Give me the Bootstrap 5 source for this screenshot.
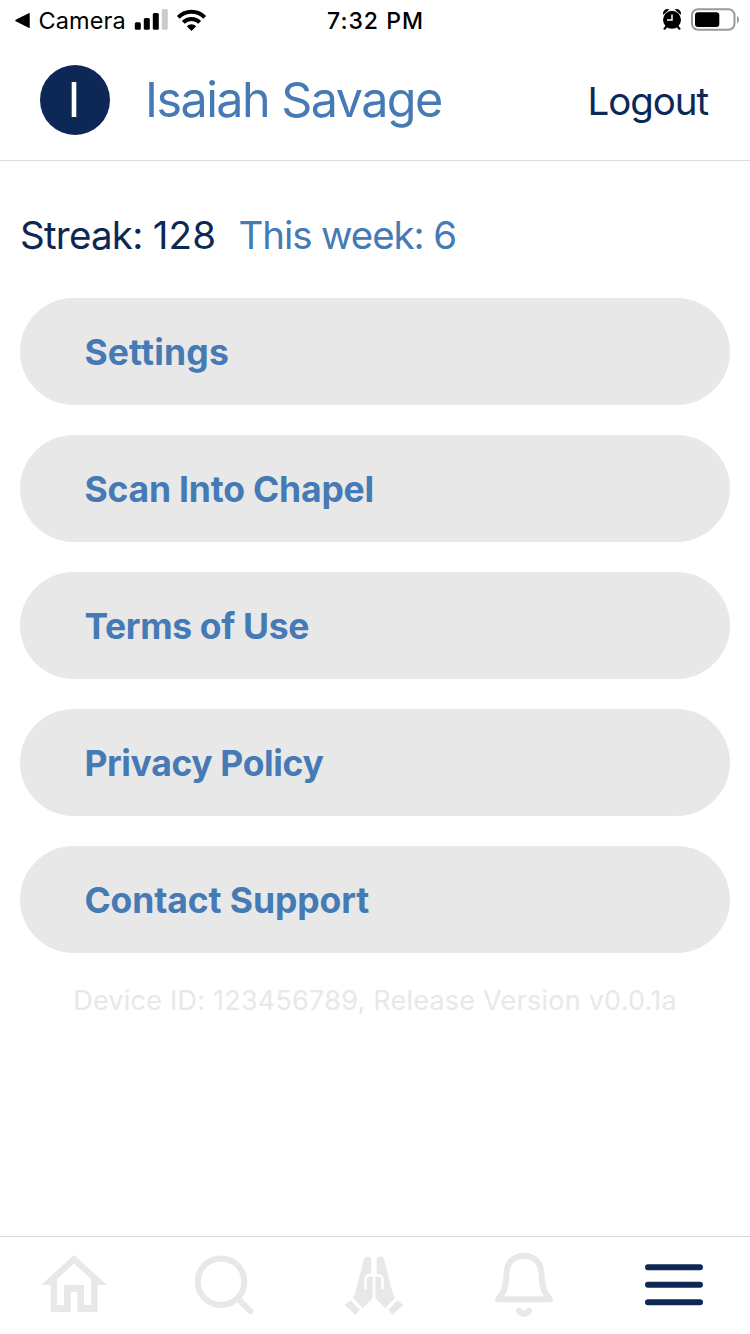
<!DOCTYPE html>
<html lang="en">
<head>
<meta charset="utf-8">
<meta name="viewport" content="width=device-width, initial-scale=1">
<title>Profile menu</title>
<link rel="stylesheet" href="https://cdn.jsdelivr.net/npm/bootstrap@5.3.0/dist/css/bootstrap.min.css">
<style>
:root{--navy:#0d2855;--blue:#467ab5;--mist:#e8e8e8}
body{font-family:Inter,"Liberation Sans",sans-serif;height:1334px;overflow:hidden;line-height:1.2}
svg{display:block;flex:none}
.status-bar{height:40px;color:#000}
.back-app{font-size:23.5px;letter-spacing:.1px;margin-left:8.5px;width:88px;padding-top:2px}
.clock{font-size:23px;font-weight:500;letter-spacing:1.03px;padding:3px 0 0 1px}
.profile-bar{height:121px;border-bottom:1px solid #dcdcdc;padding:0 42px 0 40px}
.avatar{width:70px;height:70px;background:var(--navy);font-size:48.5px;line-height:69px;margin-right:35px;padding-right:2px}
.user-name{font-size:48.5px;letter-spacing:-1.566px;color:var(--blue);line-height:58px}
.logout{font-size:38.5px;letter-spacing:-1.06px;color:var(--navy);padding-top:2px}
.stats{font-size:38.5px;line-height:46px;padding-top:51px;margin-bottom:40px}
.streak{color:var(--navy);letter-spacing:-.75px;width:218.5px}
.streak .count{letter-spacing:.2px}
.week{color:var(--blue);letter-spacing:-1.1px}
.content-area{padding:0 20px}
.menu-list{gap:30px}
.menu-pill{height:107px;background:var(--mist);color:var(--blue);font-size:35.5px;font-weight:700;text-align:left;padding:1px 64.4px 0;border:0;line-height:43px}
.device{font-size:27px;line-height:32px;letter-spacing:.23px;color:var(--mist);margin-top:32px}
.tab-bar{height:98px;border-top:1px solid #d6d6d6;color:var(--mist)}
.tab-bar a{color:inherit;width:150px}
.tab-bar a.current{color:var(--navy)}
</style>
</head>
<body class="d-flex flex-column bg-white">
<header>
  <div class="status-bar row g-0 align-items-center">
    <div class="col-4 d-flex align-items-center">
      <svg width="30" height="40" viewBox="0 0 30 40"><path d="M16 20.500 29 13.800v13.400z" fill="#000" stroke="#000" stroke-width="1.500" stroke-linejoin="round"/></svg>
      <span class="back-app">Camera</span>
      <svg width="86" height="40" viewBox="127.200 0 86 40">
        <rect x="135" y="22.300" width="6" height="7.400" rx="1.500"/><rect x="144" y="18" width="6" height="11.700" rx="1.500"/><rect x="153" y="13" width="6" height="16.700" rx="1.500"/><rect x="162" y="9" width="6" height="20.700" rx="1.500" fill="#ccc"/>
        <path d="M178.500 17.300a18.500 18.500 0 0 1 26.400 0M183.500 22.400a11.600 11.600 0 0 1 16.400 0" fill="none" stroke="#000" stroke-width="4"/>
        <path d="M187 26.300a6.600 6.600 0 0 1 9.400 0l-4.700 4.600z"/>
      </svg>
    </div>
    <div class="col-4 text-center clock">7:32 PM</div>
    <div class="col-4 d-flex justify-content-end">
      <svg width="100" height="40" viewBox="650 0 100 40">
        <circle cx="672" cy="19.800" r="9"/>
        <path d="M663 15a4.600 4.600 0 0 1 6.300-5.500zM681 15a4.600 4.600 0 0 0-6.300-5.500z"/>
        <path d="M666.500 26.500l-2 2.200M677.500 26.500l2 2.200" stroke="#000" stroke-width="2.200" stroke-linecap="round"/>
        <path d="M672 14.500V20h-5" fill="none" stroke="#fff" stroke-width="1.500"/>
        <rect x="692" y="9.200" width="42.500" height="20.600" rx="6" fill="none" stroke="#999" stroke-width="2"/>
        <rect x="695" y="12.200" width="24.300" height="14.800" rx="3"/>
        <path d="M737 15.700c2.700 1.300 2.700 6.300 0 7.600z" fill="#999"/>
      </svg>
    </div>
  </div>
  <div class="profile-bar d-flex align-items-center">
    <div class="avatar rounded-circle text-white text-center">I</div>
    <div class="user-name">Isaiah Savage</div>
    <a href="#" class="logout ms-auto text-decoration-none">Logout</a>
  </div>
</header>
<main class="content-area flex-grow-1">
  <div class="stats d-flex"><span class="streak">Streak: <span class="count">128</span></span><span class="week">This week: 6</span></div>
  <div class="menu-list d-grid">
    <button class="menu-pill rounded-pill"><span style="letter-spacing:.17px">Settings</span></button>
    <button class="menu-pill rounded-pill"><span style="letter-spacing:-.19px">Scan Into Chapel</span></button>
    <button class="menu-pill rounded-pill"><span style="letter-spacing:-.35px">Terms of Use</span></button>
    <button class="menu-pill rounded-pill"><span style="letter-spacing:-.375px">Privacy Policy</span></button>
    <button class="menu-pill rounded-pill"><span style="letter-spacing:-.1px">Contact Support</span></button>
  </div>
  <div class="device text-center text-nowrap">Device ID: 123456789, Release Version v0.0.1a</div>
</main>
<nav class="tab-bar d-flex">
  <a href="#" aria-label="Home"><svg width="150" height="97" viewBox="0 1237 150 97"><path fill="currentColor" fill-rule="evenodd" d="M74 1255 107 1285H97.500V1312H77.300V1292H70.700V1312H50.700V1285H41ZM57 1305H64V1285H84V1305H91V1279L74 1263.500 57 1279Z"/></svg></a>
  <a href="#" aria-label="Search"><svg width="150" height="97" viewBox="150 1237 150 97"><g fill="none" stroke="currentColor" stroke-width="6" stroke-linecap="round"><circle cx="221" cy="1281.700" r="23.300"/><path d="M239 1299.700 250.300 1311"/></g></svg></a>
  <a href="#" aria-label="Prayer"><svg width="150" height="97" viewBox="300 1237 150 97">
    <g id="hand"><path fill="currentColor" d="M371.300 1260V1274H372.700V1298.300L362.700 1308.300 352.700 1297.300C355 1295 355.600 1292.500 356 1290L363.800 1259.600C365 1255.300 371 1255.500 371.300 1260Z"/><path fill="currentColor" d="M350.300 1300.300 359.700 1309.700 355.500 1315 344.700 1305.300Z"/><path fill="none" stroke="#fff" stroke-width="2.500" stroke-linecap="round" d="M365.500 1288.500V1280C365.500 1277 367.500 1275.300 370.500 1275.300H374"/></g>
    <use href="#hand" transform="translate(748 0) scale(-1 1)"/></svg></a>
  <a href="#" aria-label="Notifications"><svg width="150" height="97" viewBox="450 1237 150 97"><g fill="none" stroke="currentColor" stroke-width="6" stroke-linecap="round" stroke-linejoin="round"><path d="M498 1299.300C505.500 1291.500 506 1283 506.500 1273.500C507 1262.500 514 1255.700 524 1255.700S541 1262.500 541.500 1273.500C542 1283 542.500 1291.500 550 1299.300Z"/><path d="M519 1311C522 1314.500 526 1314.500 529 1311"/></g></svg></a>
  <a href="#" class="current" aria-label="Menu"><svg width="150" height="97" viewBox="600 1237 150 97"><path fill="none" stroke="currentColor" stroke-width="6" stroke-linecap="round" d="M648 1267.200H700M648 1284.700H700M648 1302.200H700"/></svg></a>
</nav>
<script src="https://cdn.jsdelivr.net/npm/bootstrap@5.3.0/dist/js/bootstrap.bundle.min.js"></script>
</body>
</html>
